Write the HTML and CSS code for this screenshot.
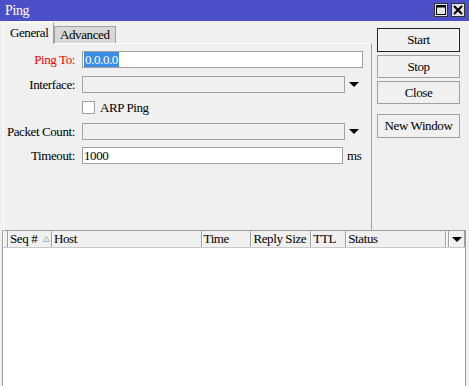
FILE: index.html
```html
<!DOCTYPE html>
<html lang="en">
<head>
    <meta charset="UTF-8">
    <title>Ping</title>
    <link rel="stylesheet" href="styles.css">
</head>
<body>
    <div class="window">
        <div class="titlebar">
            <span class="title">Ping</span>
            <div class="win-buttons">
                <span class="win-btn">
                    <svg width="10" height="10" viewBox="0 0 10 10"><rect x="0.5" y="0.5" width="9" height="9" fill="none" stroke="#000" stroke-width="1"/><line x1="0" y1="1.5" x2="10" y2="1.5" stroke="#000" stroke-width="2"/></svg>
                </span>
                <span class="win-btn">
                    <svg width="10" height="10" viewBox="0 0 10 10"><path d="M1 1 L9 9 M9 1 L1 9" stroke="#000" stroke-width="2.2"/></svg>
                </span>
            </div>
        </div>

        <div class="main">
            <div class="left">
                <div class="tabs">
                    <div class="tab active">General</div>
                    <div class="tab">Advanced</div>
                </div>
                <div class="panel">
                    <div class="row row-ping">
                        <label class="lbl red">Ping To:</label>
                        <div class="input wide"><span class="sel">0.0.0.0</span></div>
                    </div>
                    <div class="row row-iface">
                        <label class="lbl">Interface:</label>
                        <div class="input combo"></div>
                        <span class="arrow"></span>
                    </div>
                    <div class="row row-arp">
                        <span class="check"></span>
                        <span class="check-lbl">ARP Ping</span>
                    </div>
                    <div class="row row-count">
                        <label class="lbl">Packet Count:</label>
                        <div class="input combo"></div>
                        <span class="arrow"></span>
                    </div>
                    <div class="row row-timeout">
                        <label class="lbl">Timeout:</label>
                        <div class="input timeout">1000</div>
                        <span class="unit">ms</span>
                    </div>
                </div>
            </div>
            <div class="actions">
                <button class="btn default">Start</button>
                <button class="btn">Stop</button>
                <button class="btn">Close</button>
                <button class="btn new">New Window</button>
            </div>
        </div>

        <div class="list">
            <div class="list-head">
                <div class="col c-first"></div>
                <div class="col c-seq">Seq # <svg class="sort" width="7" height="6" viewBox="0 0 7 6"><path d="M3.5 0.5 L6.5 5.5 L0.5 5.5 Z" fill="#ececec" stroke="#b4b4b4"/></svg></div>
                <div class="col c-host">Host</div>
                <div class="col c-time">Time</div>
                <div class="col c-reply">Reply Size</div>
                <div class="col c-ttl">TTL</div>
                <div class="col c-status">Status</div>
                <div class="col c-pad"></div>
                <div class="col c-menu"><span class="arrow"></span></div>
            </div>
            <div class="list-body"></div>
        </div>
    </div>
</body>
</html>
```

FILE: styles.css
```css
body {
    margin: 0;
    background-color: #f0f0f0;
    font-family: "Liberation Serif", "Times New Roman", serif;
    font-size: 13px;
    letter-spacing: -0.4px;
    color: #000;
}
.window {
    width: 469px;
    height: 386px;
    overflow: hidden;
    background-color: #f0f0f0;
}
.titlebar {
    height: 21px;
    background-color: #4c50c8;
    display: flex;
    align-items: center;
    justify-content: space-between;
    padding: 0 4px 0 5px;
}
.title {
    color: #fff;
    font-size: 14px;
}
.win-buttons {
    display: flex;
    gap: 3px;
    margin-top: -1px;
}
.win-btn {
    width: 12px;
    height: 12px;
    border: 1px solid #303030;
    background-color: #e4e4e4;
    display: flex;
    align-items: center;
    justify-content: center;
}
.main {
    display: flex;
    height: 209px;
}
.left {
    margin-left: 3px;
    width: 369px;
}
.tabs {
    display: flex;
    align-items: flex-end;
    height: 22px;
}
.tab {
    height: 16px;
    line-height: 16px;
    padding: 0 5px;
    background-color: #d8d8d8;
    border: 1px solid #a0a0a0;
    border-bottom: none;
}
.tab.active {
    height: 21px;
    line-height: 19px;
    padding: 0 6px;
    background-color: #f0f0f0;
    border-color: #fff #a0a0a0 #f0f0f0 #fff;
    position: relative;
    z-index: 1;
    margin-bottom: -1px;
    width: 37px;
}
.panel {
    height: 179px;
    border: 1px solid #a0a0a0;
    border-top-color: #fff;
    border-left-color: #fff;
    padding-top: 7px;
}
.row {
    display: flex;
    align-items: center;
    height: 17px;
}
.lbl {
    width: 71px;
    text-align: right;
    margin-right: 7px;
    white-space: nowrap;
}
.red {
    color: #f00000;
}
.input {
    height: 15px;
    border: 1px solid #a0a0a0;
    background-color: #fff;
    line-height: 15px;
    padding-left: 1px;
}
.wide {
    width: 278px;
}
.combo {
    width: 260px;
    background-color: #f0f0f0;
}
.timeout {
    width: 258px;
}
.sel {
    background-color: #3b8de6;
    color: #fff;
    padding: 0 1px;
}
.arrow {
    width: 0;
    height: 0;
    border-left: 5px solid transparent;
    border-right: 5px solid transparent;
    border-top: 5px solid #000;
    margin-left: 4px;
}
.unit {
    margin-left: 4px;
}
.row-iface {
    margin-top: 8px;
}
.row-arp {
    margin-top: 8px;
    height: 13px;
    padding-left: 78px;
}
.row-count {
    margin-top: 9px;
}
.row-timeout {
    margin-top: 7px;
}
.check {
    width: 11px;
    height: 11px;
    border: 1px solid #a0a0a0;
    background-color: #fff;
}
.check-lbl {
    margin-left: 5px;
}
.actions {
    margin-left: 5px;
    padding-top: 7px;
    display: flex;
    flex-direction: column;
    width: 83px;
}
.btn {
    height: 23px;
    width: 83px;
    margin-bottom: 3px;
    border: 1px solid #a0a0a0;
    background-color: #f0f0f0;
    font-family: "Liberation Serif", "Times New Roman", serif;
    font-size: 13px;
    letter-spacing: -0.4px;
    padding: 0;
    color: #000;
}
.btn.default {
    height: 24px;
    border: 1px solid #202020;
    box-shadow: inset 0 0 0 1px #f8f8f8;
}
.btn.new {
    margin-top: 7px;
    height: 24px;
}
.list {
    margin: 0 3px 0 2px;
    border-left: 1px solid #a0a0a0;
    border-right: 1px solid #a0a0a0;
    height: 170px;
}
.list-head {
    display: flex;
    height: 16px;
    border-top: 1px solid #a0a0a0;
    border-bottom: 1px solid #c8c8c8;
    background-color: #f0f0f0;
}
.col {
    height: 16px;
    line-height: 16px;
    border-left: 1px solid #fff;
    border-right: 1px solid #a0a0a0;
    padding-left: 1px;
    box-sizing: border-box;
    white-space: nowrap;
    display: flex;
    align-items: center;
}
.c-first { width: 5px; padding: 0; }
.c-seq { width: 44px; }
.c-host { width: 150px; }
.c-time { width: 50px; }
.c-reply { width: 60px; }
.c-ttl { width: 35px; }
.c-status { width: 100px; }
.c-pad { width: 3px; padding: 0; }
.c-menu {
    width: 16px;
    justify-content: center;
    padding: 0;
}
.c-menu .arrow {
    margin-left: 0;
}
.sort {
    margin-left: 6px;
}
.list-body {
    height: 160px;
    background-color: #fff;
}
```
